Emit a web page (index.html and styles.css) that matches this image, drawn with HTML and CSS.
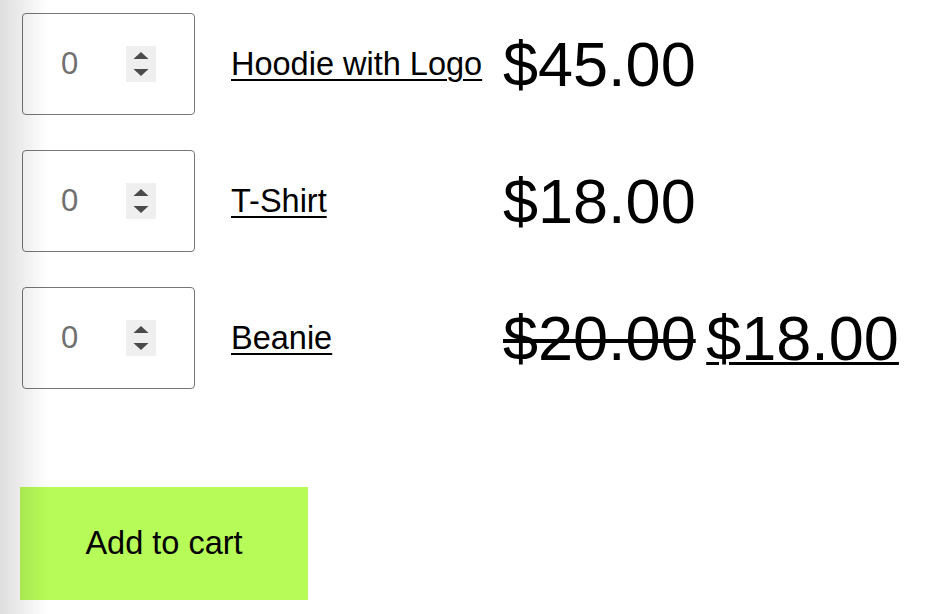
FILE: index.html
```html
<!DOCTYPE html>
<html lang="en">
<head>
    <meta charset="UTF-8">
    <meta name="viewport" content="width=device-width, initial-scale=1.0">
    <title>Grouped product</title>
    <link rel="stylesheet" href="styles.css">
</head>
<body>
    <form class="cart">
        <table class="grouped">
            <tr>
                <td class="qty-cell">
                    <label class="qty">
                        <input type="number" value="0" min="0">
                        <svg class="spin" width="30" height="36" viewBox="0 0 30 36"><rect width="30" height="36" fill="#efefef"/><polygon points="7.5,13 22.5,13 15,6" fill="#4a4a4a"/><polygon points="7.5,23 22.5,23 15,30" fill="#4a4a4a"/></svg>
                    </label>
                </td>
                <td class="name-cell"><a href="#">Hoodie with Logo</a></td>
                <td class="price">$45.00</td>
            </tr>
            <tr>
                <td class="qty-cell">
                    <label class="qty">
                        <input type="number" value="0" min="0">
                        <svg class="spin" width="30" height="36" viewBox="0 0 30 36"><rect width="30" height="36" fill="#efefef"/><polygon points="7.5,13 22.5,13 15,6" fill="#4a4a4a"/><polygon points="7.5,23 22.5,23 15,30" fill="#4a4a4a"/></svg>
                    </label>
                </td>
                <td class="name-cell"><a href="#">T-Shirt</a></td>
                <td class="price">$18.00</td>
            </tr>
            <tr>
                <td class="qty-cell">
                    <label class="qty">
                        <input type="number" value="0" min="0">
                        <svg class="spin" width="30" height="36" viewBox="0 0 30 36"><rect width="30" height="36" fill="#efefef"/><polygon points="7.5,13 22.5,13 15,6" fill="#4a4a4a"/><polygon points="7.5,23 22.5,23 15,30" fill="#4a4a4a"/></svg>
                    </label>
                </td>
                <td class="name-cell"><a href="#">Beanie</a></td>
                <td class="price"><del>$20.00</del> <ins>$18.00</ins></td>
            </tr>
        </table>
        <button type="button" class="add">Add to cart</button>
    </form>
</body>
</html>
```

FILE: styles.css
```css
body {
    font-family: "Liberation Sans", Arial, sans-serif;
    margin: 0;
    padding: 13px 20px;
    background-color: #fff;
    color: #000;
}

body::after {
    content: "";
    position: fixed;
    top: 0;
    bottom: 0;
    left: 0;
    width: 48px;
    background: linear-gradient(to right, rgba(0, 0, 0, 0.13), rgba(0, 0, 0, 0));
    pointer-events: none;
}

.grouped {
    border-collapse: collapse;
    margin-left: 2px;
}

.grouped td {
    padding: 0 0 35px 0;
    vertical-align: middle;
}

.grouped tr:last-child td {
    padding-bottom: 0;
}

.grouped .qty-cell {
    padding-right: 36px;
}

.grouped .name-cell {
    width: 252px;
    padding-right: 20px;
}

.qty {
    display: flex;
    align-items: center;
    width: 173px;
    height: 102px;
    box-sizing: border-box;
    border: 1.5px solid #767676;
    border-radius: 4px;
}

.qty input {
    width: 93px;
    margin: 0 10px 0 0;
    padding: 0;
    border: none;
    outline: none;
    background: transparent;
    font-family: inherit;
    font-size: 31px;
    color: #707070;
    text-align: center;
    -moz-appearance: textfield;
}

.qty input::-webkit-inner-spin-button,
.qty input::-webkit-outer-spin-button {
    -webkit-appearance: none;
    margin: 0;
}

.qty .spin {
    display: block;
    flex: none;
}

.name-cell a {
    color: #000;
    font-size: 32.5px;
    text-decoration: underline;
    text-decoration-thickness: 2px;
    text-underline-offset: 4px;
    white-space: nowrap;
}

.price {
    font-size: 63px;
    white-space: nowrap;
    word-spacing: -7px;
}

.price del {
    text-decoration-thickness: 4px;
}

.price ins {
    text-decoration: underline;
    text-decoration-thickness: 3px;
}

.add {
    display: block;
    width: 288px;
    height: 113px;
    margin-top: 98px;
    border: none;
    background-color: #b7fb58;
    color: #000;
    font-family: inherit;
    font-size: 32.5px;
    cursor: pointer;
}
```
